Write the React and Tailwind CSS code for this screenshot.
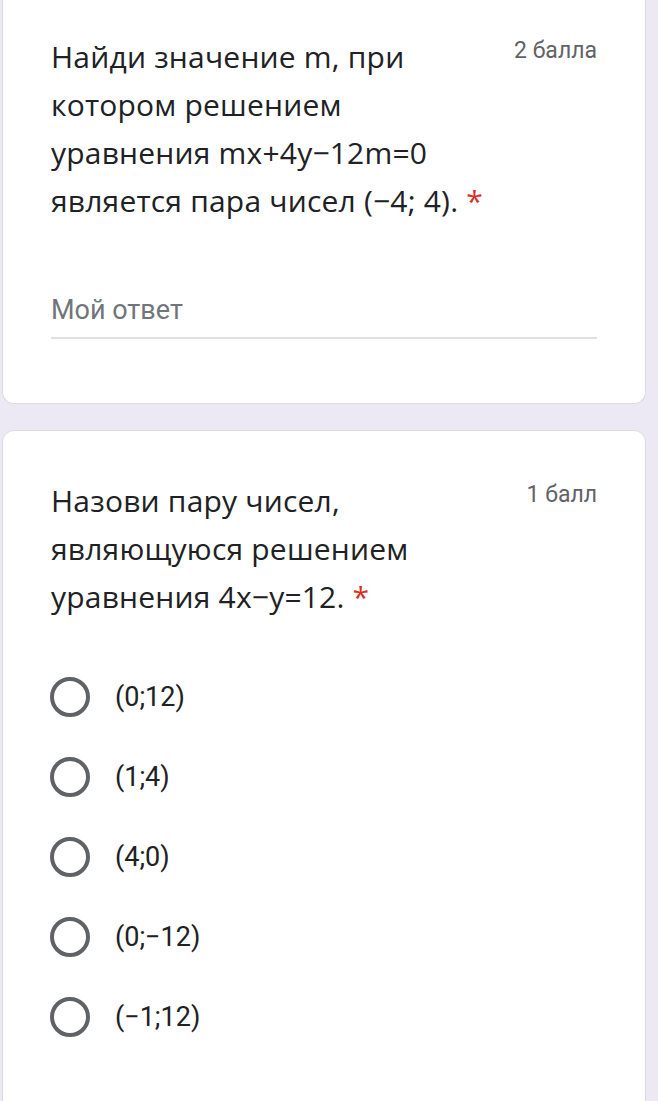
const options = ["(0;12)", "(1;4)", "(4;0)", "(0;−12)", "(−1;12)"];

function Points({ children }) {
  return (
    <span className="shrink-0 pt-[2px] font-['Roboto',sans-serif] text-[23px] leading-[32px] text-[#5f6368]">
      {children}
    </span>
  );
}

function Radio({ label }) {
  return (
    <div className="flex h-[80px] items-center">
      <span className="ml-[-1px] h-[40px] w-[40px] rounded-full border-[4px] border-[#5f6368]" />
      <span className="ml-[25px] font-['Roboto',sans-serif] text-[27px] text-[#202124]">{label}</span>
    </div>
  );
}

export default function App() {
  return (
    <div className="h-[1101px] overflow-hidden bg-[#ece9f5] font-['Open_Sans','Roboto',sans-serif]">
      <div className="mx-[2px] mr-[12px] rounded-b-[12px] border border-t-0 border-[#dadce0] bg-white px-[48px] pb-[64px] pt-[33px]">
        <div className="flex items-start justify-between gap-4">
          <h2 className="text-[30px] leading-[48px] tracking-[0.2px] text-[#202124]">
            Найди значение m, при
            <br />
            котором решением
            <br />
            уравнения mx+4y−12m=0
            <br />
            является пара чисел (−4; 4). <span className="text-[#d93025]">*</span>
          </h2>
          <Points>2 балла</Points>
        </div>
        <div className="mt-[66px] border-b-2 border-[#e0e0e0] pb-[8px] font-['Roboto',sans-serif] text-[27px] leading-[38px] text-[#70757a]">
          Мой ответ
        </div>
      </div>

      <div className="mx-[2px] mr-[12px] mt-[26px] rounded-[12px] border border-[#dadce0] bg-white px-[48px] pb-[80px] pt-[46px]">
        <div className="flex items-start justify-between gap-4">
          <h2 className="text-[30px] leading-[48px] tracking-[0.2px] text-[#202124]">
            Назови пару чисел,
            <br />
            являющуюся решением
            <br />
            уравнения 4x−y=12. <span className="text-[#d93025]">*</span>
          </h2>
          <Points>1 балл</Points>
        </div>
        <div className="mt-[36px] flex flex-col">
          {options.map((o) => (
            <Radio key={o} label={o} />
          ))}
        </div>
      </div>
    </div>
  );
}
